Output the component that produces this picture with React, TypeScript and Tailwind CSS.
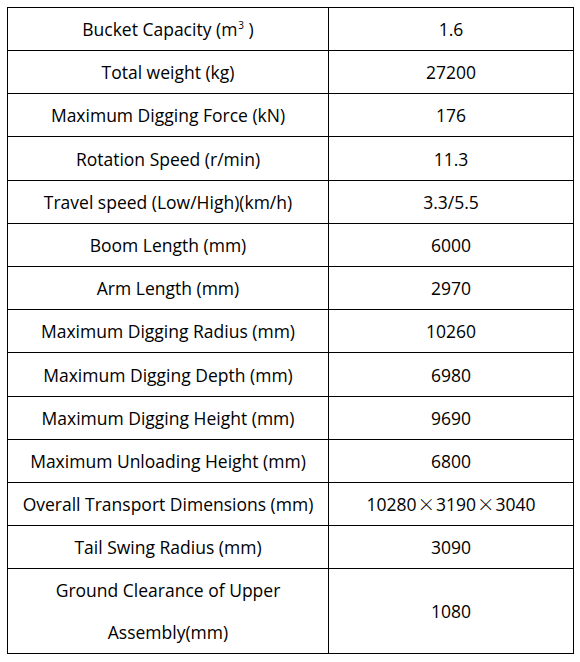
import React from 'react';

interface SpecRow {
  label: React.ReactNode;
  value: React.ReactNode;
  h: string;
}

const times = <span className="font-['Noto_Sans_CJK_SC',sans-serif] font-light mx-[1px]">×</span>;

const rows: SpecRow[] = [
  { label: <>Bucket Capacity (m<span className="text-[10px] leading-none relative -top-[7px] ml-[1px]">3</span> )</>, value: '1.6', h: 'h-[43px]' },
  { label: 'Total weight (kg)', value: '27200', h: 'h-[43px]' },
  { label: 'Maximum Digging Force (kN)', value: '176', h: 'h-[43px]' },
  { label: 'Rotation Speed (r/min)', value: '11.3', h: 'h-[44px]' },
  { label: 'Travel speed (Low/High)(km/h)', value: '3.3/5.5', h: 'h-[43px]' },
  { label: 'Boom Length (mm)', value: '6000', h: 'h-[43px]' },
  { label: 'Arm Length (mm)', value: '2970', h: 'h-[43px]' },
  { label: 'Maximum Digging Radius (mm)', value: '10260', h: 'h-[43px]' },
  { label: 'Maximum Digging Depth (mm)', value: '6980', h: 'h-[44px]' },
  { label: 'Maximum Digging Height (mm)', value: '9690', h: 'h-[43px]' },
  { label: 'Maximum Unloading Height (mm)', value: '6800', h: 'h-[43px]' },
  { label: 'Overall Transport Dimensions (mm)', value: <>10280{times}3190{times}3040</>, h: 'h-[43px]' },
  { label: 'Tail Swing Radius (mm)', value: '3090', h: 'h-[43px]' },
  { label: <>Ground Clearance of Upper<br />Assembly(mm)</>, value: '1080', h: 'h-[85px]' },
];

export default function App() {
  return (
    <div className="w-[580px] h-[662px] bg-white pt-[7px] pl-[7px] font-['Open_Sans',sans-serif] text-[17.5px] text-black">
      <div className="w-[567px] border-l border-t border-black">
        {rows.map((r, i) => (
          <div key={i} className={`grid grid-cols-[321px_245px] ${r.h}`}>
            <div className="flex items-center justify-center text-center border-r border-b border-black leading-[42px] whitespace-nowrap overflow-hidden">
              <span>{r.label}</span>
            </div>
            <div className="flex items-center justify-center text-center border-r border-b border-black leading-[42px] whitespace-nowrap overflow-hidden">
              <span>{r.value}</span>
            </div>
          </div>
        ))}
      </div>
    </div>
  );
}
